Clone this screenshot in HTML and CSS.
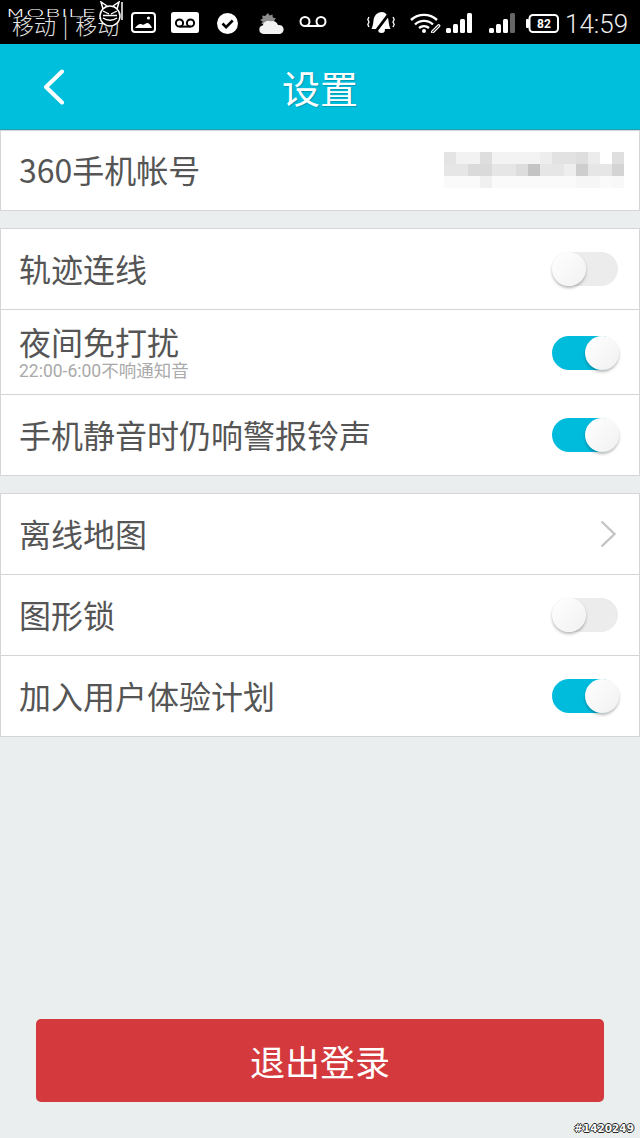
FILE: index.html
```html
<!DOCTYPE html>
<html lang="zh">
<head>
<meta charset="utf-8">
<title>设置</title>
<link rel="stylesheet" href="styles.css">
</head>
<body>
<div class="page">
  <div class="status">
    <span class="carrier">移动 | 移动</span>
    <svg class="ic ic-pic" viewBox="0 0 25 21"><rect x="1" y="1" width="23" height="19" rx="3" fill="none" stroke="#fff" stroke-width="2"/><path d="M4 16c2-3 5-5 7-3.500 2 1 3-1 5-1.500 2 0 4 2 5 5z" fill="#fff"/><circle cx="17.500" cy="6" r="1.600" fill="#fff"/></svg>
    <svg class="ic ic-box" viewBox="0 0 28 21"><rect width="28" height="21" rx="2.500" fill="#fff"/><circle cx="8.500" cy="11" r="3.600" fill="none" stroke="#000" stroke-width="2"/><circle cx="19.500" cy="11" r="3.600" fill="none" stroke="#000" stroke-width="2"/><path d="M8.500 14.600h11" stroke="#000" stroke-width="2"/></svg>
    <svg class="ic ic-check" viewBox="0 0 21 21"><circle cx="10.500" cy="10.500" r="10.500" fill="#fff"/><path d="M5.500 10.500l3.600 3.600 6.600-6.600" fill="none" stroke="#000" stroke-width="2.600"/></svg>
    <svg class="ic ic-cloud" viewBox="0 0 25 21"><path d="M9 0l1.600 2.600 2.900-1 .3 3 3 .6-1.500 2.600L6 11 2.300 11 3.700 8.600 1 7l2.800-1.400L3 2.600l3 .4z" fill="#8c8c8c"/><path d="M4.500 21a4.300 4.300 0 0 1-.8-8.500 6 6 0 0 1 7.800-4.300 6.500 6.500 0 0 1 7.500 3.800 4.600 4.600 0 0 1 2 9z" fill="#f2f2f2"/></svg>
    <svg class="ic ic-vm" viewBox="0 0 28 11"><circle cx="6" cy="5.500" r="4.500" fill="none" stroke="#fff" stroke-width="2"/><circle cx="22" cy="5.500" r="4.500" fill="none" stroke="#fff" stroke-width="2"/><path d="M6 10h16" stroke="#fff" stroke-width="2"/></svg>
    <svg class="ic ic-mute" viewBox="0 0 28 21"><path d="M15 0c-5 0-8 4-8.500 8.500C6.200 12 5.500 15 4.500 17h19c-1-2-1.700-5-2-8.500C21 4 19 0 15 0z" fill="#fff"/><path d="M11 17.500a3.500 3.500 0 0 0 7 0l-.5-.5h-6z" fill="#fff"/><path d="M25 -2L6 23" stroke="#000" stroke-width="2.800"/><path d="M2 5L.8 7.500 2 10 .8 12.500 2 15M26 5l1.200 2.500L26 10l1.200 2.500L26 15" fill="none" stroke="#fff" stroke-width="1.300"/></svg>
    <svg class="ic ic-wifi" viewBox="0 0 31 20"><path d="M1 7a19 19 0 0 1 26 0" fill="none" stroke="#fff" stroke-width="2.400"/><path d="M5 11.500a13 13 0 0 1 18 0" fill="none" stroke="#fff" stroke-width="2.400"/><path d="M9 15a8 8 0 0 1 10 0" fill="none" stroke="#fff" stroke-width="2.400"/><circle cx="14" cy="18" r="2" fill="#fff"/><path d="M22 18l6-6c1-1 2.500.5 1.500 1.500l-6 6c-1 1-3 0-1.500-1.500z" fill="none" stroke="#fff" stroke-width="1.100"/></svg>
    <svg class="ic ic-sig" viewBox="0 0 26 20"><rect y="15" width="5" height="5" rx="1.500" fill="#fff"/><rect x="7" y="11" width="5" height="9" rx="1.500" fill="#fff"/><rect x="14" y="6" width="5" height="14" rx="1.500" fill="#fff"/><rect x="21" y="0" width="5" height="20" rx="1.500" fill="#fff"/></svg>
    <svg class="ic ic-sig2" viewBox="0 0 26 20"><rect y="15" width="5" height="5" rx="1.500" fill="#fff"/><rect x="7" y="11" width="5" height="9" rx="1.500" fill="#fff"/><rect x="14" y="6" width="5" height="14" rx="1.500" fill="#fff"/><rect x="21" y="0" width="5" height="20" rx="1.500" fill="#666"/></svg>
    <svg class="ic ic-batt" viewBox="0 0 33 19"><rect x="0" y="5" width="3" height="9" rx="1" fill="#fff"/><rect x="3.500" y="1" width="28.500" height="17" rx="3.500" fill="none" stroke="#fff" stroke-width="2"/><text x="18" y="14" class="batt-num">82</text></svg>
    <span class="time">14:59</span>
  </div>

  <header class="topbar">
    <svg class="back" viewBox="0 0 22 36"><path d="M19 2.500L3 18l16 15.500" fill="none" stroke="#fff" stroke-width="4" stroke-linecap="round" stroke-linejoin="round"/></svg>
    <h1 class="title">设置</h1>
  </header>

  <section class="group group-first">
    <div class="row row-account">
      <span class="label">360手机帐号</span>
      <svg class="blur" viewBox="0 0 180 36">
        <g>
          <rect x="0" width="180" height="12" fill="#ececec"/>
          <rect x="36" width="36" height="12" fill="#f3f3f3"/>
          <rect x="108" width="24" height="12" fill="#e2e2e2"/>
          <rect x="72" width="12" height="12" fill="#f1f1f1"/>
          <rect x="0" width="12" height="12" fill="#e4e4e4"/>
          <rect x="12" width="24" height="12" fill="#f2f2f2"/>
          <rect x="36" width="12" height="12" fill="#dedede"/>
          <rect x="72" width="24" height="12" fill="#f3f3f3"/>
          <rect x="96" width="12" height="12" fill="#ededed"/>
          <rect x="132" width="12" height="12" fill="#dedede"/>
          <rect x="156" width="12" height="12" fill="#fff"/>
          <rect x="168" width="12" height="12" fill="#dfdfdf"/>
          <rect y="12" width="180" height="12" fill="#e6e6e6"/>
          <rect x="24" y="12" width="24" height="12" fill="#dadada"/>
          <rect x="84" y="12" width="12" height="12" fill="#c4c4c4"/>
          <rect x="132" y="12" width="12" height="12" fill="#cecece"/>
          <rect x="168" y="12" width="12" height="12" fill="#d4d4d4"/>
          <rect x="72" y="12" width="12" height="12" fill="#dddddd"/>
          <rect x="120" y="12" width="12" height="12" fill="#eeeeee"/>
          <rect y="24" width="168" height="12" fill="#fafafa"/>
          <rect x="36" y="24" width="12" height="12" fill="#f0f0f0"/>
          <rect x="132" y="24" width="24" height="12" fill="#f6f6f6"/>
          <rect x="168" y="24" width="12" height="12" fill="#f8f8f8"/>
        </g>
      </svg>
    </div>
  </section>

  <section class="group">
    <div class="row">
      <span class="label">轨迹连线</span>
      <span class="switch"><span class="knob"></span></span>
    </div>
    <div class="row row-tall">
      <div class="stack">
        <span class="label">夜间免打扰</span>
        <span class="sub">22:00-6:00不响通知音</span>
      </div>
      <span class="switch on"><span class="knob"></span></span>
    </div>
    <div class="row">
      <span class="label">手机静音时仍响警报铃声</span>
      <span class="switch on"><span class="knob"></span></span>
    </div>
  </section>

  <section class="group">
    <div class="row">
      <span class="label">离线地图</span>
      <svg class="chev" viewBox="0 0 16 28"><path d="M1.500 1.500L14.500 14 1.500 26.500" fill="none" stroke="#c4c4c4" stroke-width="2.400"/></svg>
    </div>
    <div class="row">
      <span class="label">图形锁</span>
      <span class="switch"><span class="knob"></span></span>
    </div>
    <div class="row">
      <span class="label">加入用户体验计划</span>
      <span class="switch on"><span class="knob"></span></span>
    </div>
  </section>

  <button class="logout" type="button">退出登录</button>

  <div class="wm-logo">
    <span class="wm-text">MOBILE</span>
    <svg class="wm-face" viewBox="0 0 26 30"><path d="M5 8L3 1l6 4M19 8l2-7-6 4" fill="none" stroke="#fff" stroke-width="1.500"/><circle cx="12" cy="15" r="10" fill="#000" stroke="#fff" stroke-width="1.500"/><path d="M5 10l6 3M19 10l-6 3M5 17c4 3 10 3 14 0M5 14.500h14" fill="none" stroke="#fff" stroke-width="1.300"/><path d="M24 1v18" stroke="#fff" stroke-width="1.500"/></svg>
  </div>
  <span class="wm-id">#1420249</span>
</div>
</body>
</html>
```
FILE: styles.css
```css
* { box-sizing: border-box; }
html, body { margin: 0; padding: 0; }
body {
  width: 640px;
  height: 1138px;
  overflow: hidden;
  background: #eaeeef;
  font-family: "Noto Sans CJK SC", "Roboto", sans-serif;
  color: #555;
}
.page {
  position: relative;
  width: 640px;
  height: 1138px;
  display: flex;
  flex-direction: column;
}

/* status bar */
.status {
  height: 44px;
  flex: none;
  background: #000;
  display: flex;
  align-items: flex-start;
  padding-left: 12px;
  color: #fff;
}
.carrier {
  width: 110px;
  margin-top: 9px;
  font-size: 22px;
  line-height: 30px;
  font-weight: 300;
  word-spacing: 2px;
  white-space: nowrap;
  color: #e4e4e4;
}
.ic { display: block; flex: none; margin-top: 12px; }
.ic-pic { width: 25px; height: 21px; margin-left: 9px; }
.ic-box { width: 28px; height: 21px; margin-left: 15px; }
.ic-check { width: 21px; height: 21px; margin-left: 18px; margin-top: 13px; }
.ic-cloud { width: 25px; height: 21px; margin-left: 21px; margin-top: 13px; }
.ic-vm { width: 28px; height: 11px; margin-left: 15px; margin-top: 16px; }
.ic-mute { width: 28px; height: 21px; margin-left: 40px; }
.ic-wifi { width: 31px; height: 20px; margin-left: 15px; margin-top: 13px; }
.ic-sig { width: 26px; height: 20px; margin-left: 5px; margin-top: 13px; }
.ic-sig2 { width: 26px; height: 20px; margin-left: 17px; margin-top: 13px; }
.ic-batt { width: 33px; height: 19px; margin-left: 11px; margin-top: 14px; }
.batt-num {
  font-family: "Roboto", sans-serif;
  font-size: 12px;
  font-weight: 700;
  fill: #fff;
  text-anchor: middle;
}
.time {
  margin-left: 6px;
  margin-top: 9px;
  font-family: "Roboto", sans-serif;
  font-size: 26px;
  line-height: 30px;
  font-weight: 300;
  color: #ededed;
}

/* top bar */
.topbar {
  height: 86px;
  flex: none;
  background: #00bfdd;
  border-bottom: 1px solid #1aa3b5;
  position: relative;
  display: flex;
  align-items: center;
  justify-content: center;
}
.back {
  position: absolute;
  left: 43px;
  top: 25px;
  width: 22px;
  height: 36px;
}
.title {
  margin: 0;
  font-size: 38px;
  line-height: 50px;
  font-weight: 400;
  color: #fff;
  text-shadow: 1px 1px 1px rgba(0, 90, 110, .35);
}

/* groups */
.group {
  flex: none;
  background: #fff;
  border: 1px solid #d4d6d6;
  margin-top: 17px;
}
.group-first { margin-top: 0; }
.row {
  height: 81px;
  border-bottom: 1px solid #d4d6d6;
  padding: 0 21px 0 18px;
  display: flex;
  align-items: center;
  justify-content: space-between;
}
.row:last-child { height: 80px; border-bottom: 0; }
.row-tall { height: 85px; }
.row-tall .switch { margin-top: 2px; }
.row-account { height: 79px; }
.row-account:last-child { height: 79px; }
.label {
  font-size: 32px;
  line-height: 42px;
  padding-bottom: 3px;
  color: #555;
  white-space: nowrap;
}
.stack {
  display: flex;
  flex-direction: column;
}
.stack .label { line-height: 36px; padding-bottom: 2px; }
.sub {
  font-family: "Roboto", "Noto Sans CJK SC", sans-serif;
  font-size: 17.500px;
  line-height: 20px;
  color: #aaa;
  white-space: nowrap;
}
.blur {
  width: 180px;
  height: 36px;
  margin-right: -6px;
  margin-bottom: 2px;
  flex: none;
}
.chev {
  width: 16px;
  height: 28px;
  margin-right: 2px;
}

/* switches */
.switch {
  position: relative;
  display: block;
  width: 66px;
  height: 34px;
  border-radius: 17px;
  background: #ececec;
  flex: none;
}
.switch.on { background: #00bcdc; }
.knob {
  position: absolute;
  left: 0;
  top: 0;
  width: 34px;
  height: 34px;
  border-radius: 50%;
  background: linear-gradient(135deg, #fff, #f1f1f1);
  box-shadow: 0 2px 3px rgba(0, 0, 0, .28);
}
.switch.on .knob { left: 33px; }

/* logout */
.logout {
  flex: none;
  width: 568px;
  height: 83px;
  margin: 282px 0 0 36px;
  padding: 0;
  border: 0;
  border-radius: 5px;
  background: #d43a3d;
  color: #fff;
  font-family: inherit;
  font-size: 35px;
  font-weight: 400;
}

/* watermarks */
.wm-logo {
  position: absolute;
  left: 5px;
  top: 0;
  display: flex;
  align-items: flex-start;
}
.wm-text {
  display: block;
  width: 93px;
  margin-top: 7px;
  font-family: "DejaVu Sans", sans-serif;
  font-size: 10.500px;
  line-height: 13px;
  font-weight: 200;
  color: #fff;
  text-shadow: 0 1px 0 #000;
  white-space: nowrap;
  transform: scaleX(2.300);
  transform-origin: left center;
}
.wm-face { width: 26px; height: 30px; margin-top: 1px; }
.wm-id {
  position: absolute;
  right: 6px;
  bottom: 3px;
  font-family: "DejaVu Sans", sans-serif;
  font-size: 10.500px;
  line-height: 14px;
  font-weight: 700;
  color: #fff;
  text-shadow: 1px 0 0 #222, -1px 0 0 #222, 0 1px 0 #222, 0 -1px 0 #222;
}
```
